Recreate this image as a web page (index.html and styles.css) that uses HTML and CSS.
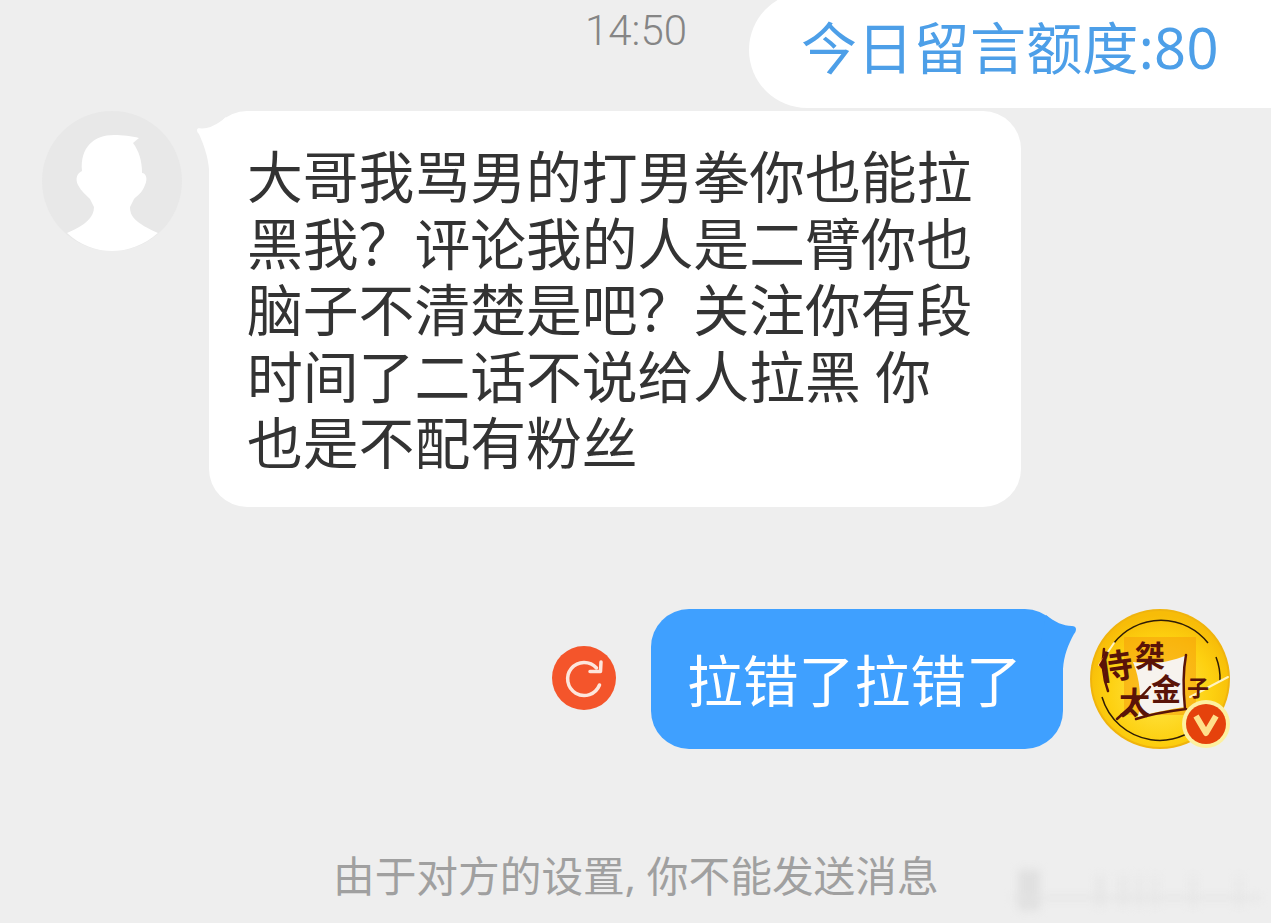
FILE: index.html
```html
<!DOCTYPE html>
<html lang="zh-CN">
<head>
    <meta charset="UTF-8">
    <meta name="viewport" content="width=device-width, initial-scale=1.0">
    <title>私信</title>
    <link rel="stylesheet" href="styles.css">
</head>
<body>
    <div class="topbar">
        <div class="time">14:50</div>
        <div class="quota">今日留言额度:80</div>
    </div>

    <div class="row incoming">
        <svg class="avatar" viewBox="0 0 140 140">
            <circle cx="70" cy="70" r="70" fill="#e8e8e8"/>
            <path fill="#fff" d="M40 60C38 36 52 24 72 24C80 24 90 25 97 27L91 32C97 40 100 50 100 62C104 62 106 68 103 74C100 82 96 84 92 88L88 96C88 106 94 112 116 122C102 134 86 140 70 140C54 140 38 134 25 122C44 114 52 106 52 96L48 88C44 84 39 80 36 74C33 68 35 62 40 60Z"/>
        </svg>
        <div class="bubble left">
            <svg class="tail tail-left" viewBox="0 0 40 60"><path fill="#fff" d="M0 19C0 17 2 17 4 17.500C11 18 20 14 29 6L36 40L12 58C11 46 7 34 2 23C1 22 0 21 0 19Z"/></svg>
            大哥我骂男的打男拳你也能拉<br>黑我？评论我的人是二臂你也<br>脑子不清楚是吧？关注你有段<br>时间了二话不说给人拉黑 你<br>也是不配有粉丝
        </div>
    </div>

    <div class="row outgoing">
        <svg class="retry" viewBox="0 0 64 64">
            <circle cx="32" cy="32" r="32" fill="#f4552b"/>
            <path fill="none" stroke="#fde6dc" stroke-width="3.500" stroke-linecap="round" d="M47.500 39A16.500 16.500 0 1 1 44.500 22"/>
            <path fill="none" stroke="#fde6dc" stroke-width="3.500" stroke-linecap="round" stroke-linejoin="round" d="M38 25.500L48.500 25.500L49 16"/>
        </svg>
        <div class="bubble right">
            拉错了拉错了
            <svg class="tail tail-right" viewBox="0 0 40 60"><path fill="#3fa0ff" d="M40 20C40 18 38 17 36 17C27 17 19 13 10 6L4 40L27 60C28 46 32 36 38 25C39 24 40 22 40 20Z"/></svg>
        </div>
        <svg class="avatar" viewBox="0 0 140 140">
            <defs>
                <radialGradient id="coin" cx="50%" cy="58%" r="55%">
                    <stop offset="0" stop-color="#ffe94f"/>
                    <stop offset="0.7" stop-color="#fdd010"/>
                    <stop offset="1" stop-color="#f7bc08"/>
                </radialGradient>
            </defs>
            <circle cx="70" cy="70" r="70" fill="#f0b40c"/>
            <circle cx="70" cy="70" r="68" fill="url(#coin)"/>
            <path fill="none" stroke="#2e1c06" stroke-width="1.500" d="M24 34A60 60 0 0 1 118 34M12 88A60 60 0 0 0 120 104M130 72A60 60 0 0 0 126 48"/>
            <path fill="#f59e0b" d="M34 28H106V106H34Z" opacity="0.550"/>
            <path fill="#f7f3ee" d="M43 53C60 56 78 54 97 46C93 62 93 80 96 98C80 100 62 104 48 108C52 90 50 70 43 53Z"/>
            <path fill="none" stroke="#5a1408" stroke-width="2.500" stroke-linecap="round" d="M96 46C93 62 93 80 95 100M46 110C64 104 80 102 96 100M27 110C38 100 50 90 60 78M14 40C12 52 12 66 18 82"/>
            <path fill="none" stroke="#fff3c0" stroke-width="2" stroke-linecap="round" d="M9 56L24 34M100 88L138 68"/>
            <text class="logo-text" transform="rotate(-8 24 60)" x="9" y="70" font-size="34">侍</text>
            <text class="logo-text" x="45" y="58" font-size="30">桀</text>
            <text class="logo-text" x="29" y="105" font-size="31">太</text>
            <text class="logo-text" x="61" y="91" font-size="30">金</text>
            <text class="logo-text" x="97" y="87" font-size="22">子</text>
            <circle cx="116" cy="115" r="24" fill="#fdf0a0"/>
            <circle cx="116" cy="115" r="20" fill="#e5420c"/>
            <path fill="none" stroke="#ffdf8a" stroke-width="6" stroke-linejoin="round" d="M106 107L116 124L126 107"/>
        </svg>
    </div>

    <div class="notice">由于对方的设置, 你不能发送消息</div>

    <div class="watermark"></div>
</body>
</html>
```

FILE: styles.css
```css
body {
    font-family: "Noto Sans", "Noto Sans CJK SC", sans-serif;
    display: flex;
    flex-direction: column;
    height: 923px;
    margin: 0;
    overflow: hidden;
    position: relative;
    background-color: #eeeeee;
}

.topbar {
    display: flex;
    justify-content: flex-end;
    height: 108px;
}

.time {
    margin-top: 7px;
    margin-right: 62px;
    font-family: Roboto, sans-serif;
    font-size: 42px;
    font-weight: 300;
    line-height: 48px;
    color: #858585;
}

.quota {
    width: 470px;
    height: 116px;
    margin-top: -8px;
    padding-left: 52px;
    border-radius: 58px 0 0 58px;
    font-size: 56px;
    letter-spacing: 0.300px;
    line-height: 111px;
    color: #4d9fe8;
    background-color: #fff;
}

.row {
    display: flex;
}

.incoming {
    margin-top: 3px;
    padding-left: 42px;
}

.outgoing {
    justify-content: flex-end;
    align-items: center;
    margin-top: 102px;
    padding-right: 41px;
}

.avatar {
    flex: none;
    width: 140px;
    height: 140px;
}

.bubble {
    position: relative;
    font-size: 55.800px;
    line-height: 66.500px;
    white-space: nowrap;
}

.left {
    width: 726px;
    margin-left: 27px;
    padding: 32px 48px 31px 38px;
    border-radius: 38px;
    color: #333;
    background-color: #fff;
}

.right {
    box-sizing: border-box;
    width: 412px;
    height: 140px;
    margin: 0 27px 0 35px;
    padding: 38px 0 0 36px;
    border-radius: 38px;
    color: #fff;
    background-color: #3fa0ff;
}

.tail {
    position: absolute;
    top: 0;
    width: 40px;
    height: 60px;
}

.tail-left {
    left: -12px;
}

.tail-right {
    right: -13px;
}

.retry {
    flex: none;
    width: 64px;
    height: 64px;
    margin-top: -2px;
}

.logo-text {
    font-family: "Noto Sans CJK SC", sans-serif;
    font-weight: 700;
    fill: #5a1408;
}

.notice {
    margin-top: 102px;
    padding-left: 333px;
    font-size: 41.700px;
    line-height: 50px;
    color: #a0a0a0;
}

/* faint blurred stamp in the corner */
.watermark {
    position: absolute;
    left: 1012px;
    top: 870px;
    width: 248px;
    height: 40px;
    filter: blur(4px);
    background:
        linear-gradient(#e4e4e4, #e4e4e4) 0 26px / 100% 4px no-repeat,
        linear-gradient(#e0e0e0, #e0e0e0) 6px 0 / 22px 100% no-repeat,
        linear-gradient(#e6e6e6, #e6e6e6) 84px 6px / 8px 30px no-repeat,
        linear-gradient(#e6e6e6, #e6e6e6) 108px 6px / 6px 30px no-repeat,
        linear-gradient(#e8e8e8, #e8e8e8) 124px 6px / 6px 30px no-repeat,
        linear-gradient(#e8e8e8, #e8e8e8) 140px 6px / 6px 30px no-repeat,
        linear-gradient(#e8e8e8, #e8e8e8) 178px 6px / 6px 30px no-repeat,
        linear-gradient(#e8e8e8, #e8e8e8) 224px 6px / 6px 30px no-repeat;
}
```
